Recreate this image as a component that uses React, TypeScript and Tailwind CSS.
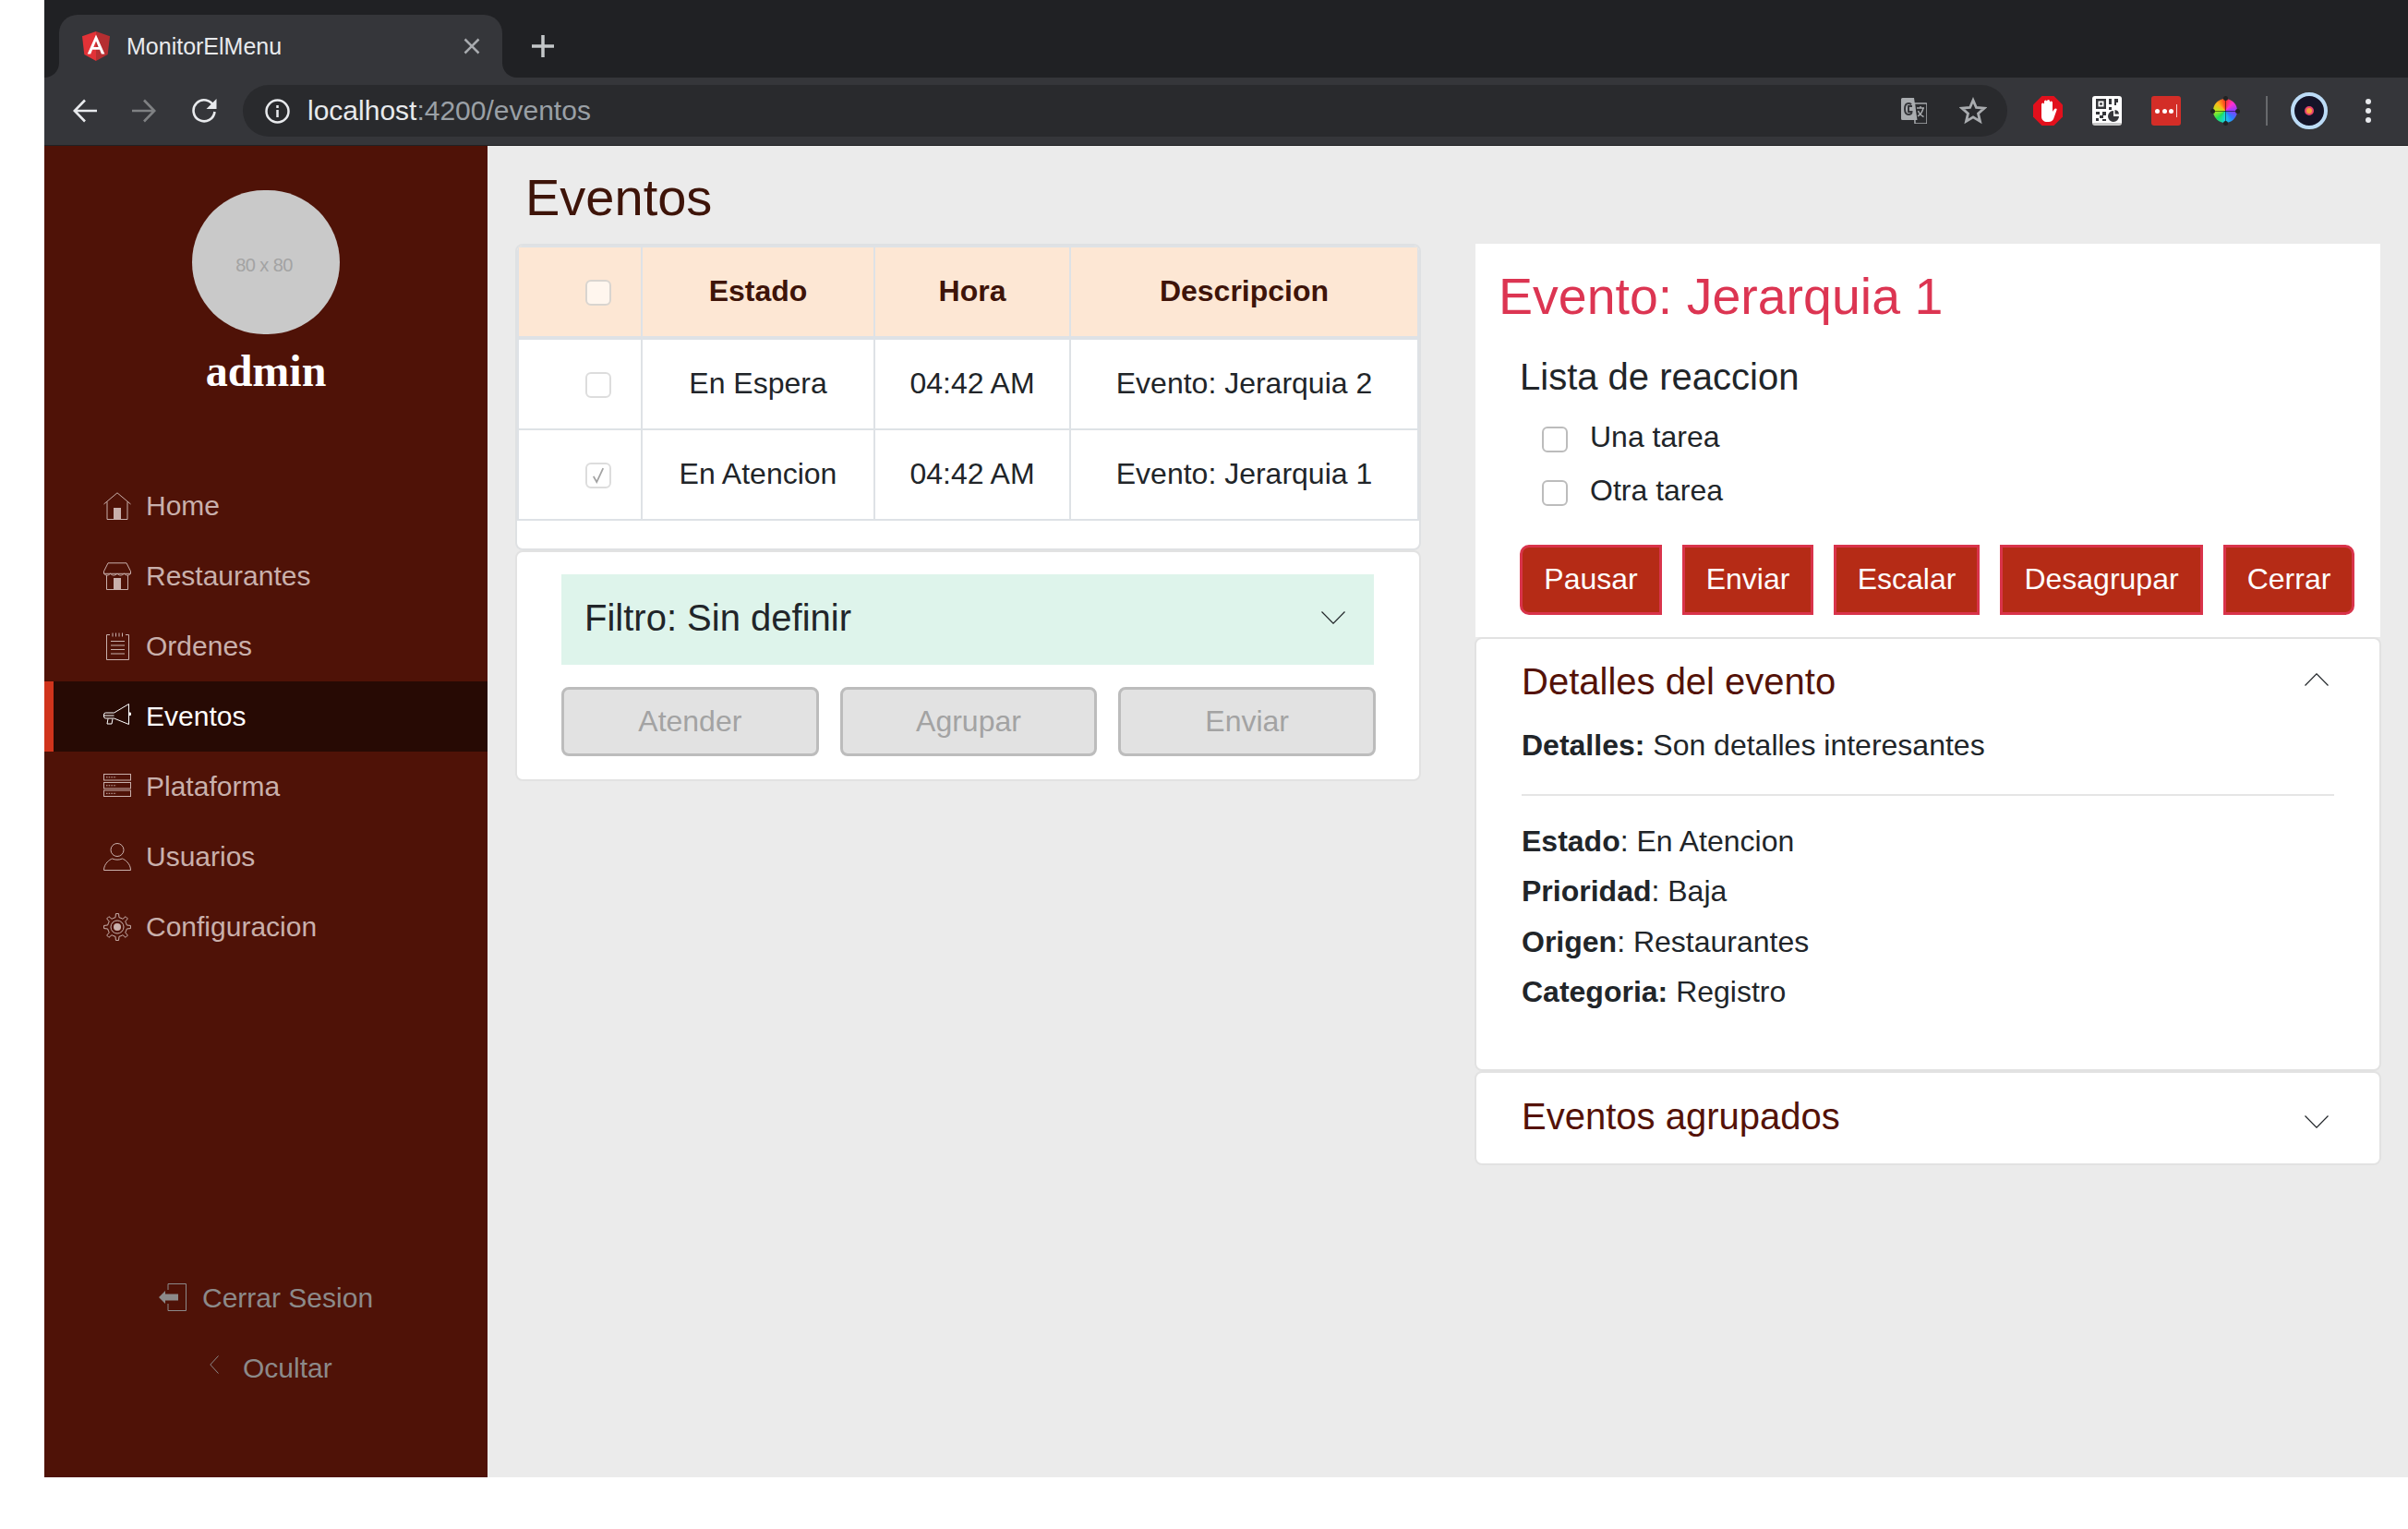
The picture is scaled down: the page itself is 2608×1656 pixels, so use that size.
import type { ReactNode } from "react";

const FONT = "font-['Liberation_Sans',Arial,sans-serif]";

function gearPath() {
  // outer outline of the 8 tooth gear used in the sidebar
  const pts: string[] = [];
  const teeth = 8;
  for (let i = 0; i < teeth; i++) {
    const a = (i / teeth) * Math.PI * 2;
    const step = (Math.PI * 2) / teeth;
    const seq: [number, number][] = [
      [10.5, a - step * 0.5],
      [10.5, a - step * 0.24],
      [14.5, a - step * 0.14],
      [14.5, a + step * 0.14],
      [10.5, a + step * 0.24],
    ];
    seq.forEach(([r, t]) => {
      pts.push(`${(15 + r * Math.cos(t)).toFixed(2)} ${(15 + r * Math.sin(t)).toFixed(2)}`);
    });
  }
  return `M${pts.join("L")}Z`;
}

function NavSvg({ children }: { children: ReactNode }) {
  return (
    <svg viewBox="0 0 30 30" className="w-[30px] h-[30px] shrink-0" fill="none" stroke="currentColor" strokeWidth="1">
      {children}
    </svg>
  );
}

const HomeIcon = () => (
  <NavSvg>
    <path d="M.5 13 15 .8 29.5 13" />
    <path d="M4 10.5v19h22v-19" />
    <rect x="11" y="17" width="8" height="12.5" fill="currentColor" stroke="none" />
  </NavSvg>
);

const StoreIcon = () => (
  <NavSvg>
    <path d="M5 .8h20l4.5 9v2.500h-29V9.800z" />
    <path d="M.5 12.300c2.400 2.400 4.700 2.400 7 0 2.400 2.400 4.700 2.400 7.500 0 2.400 2.400 4.700 2.400 7.500 0 2.400 2.400 4.700 2.400 7 0" />
    <path d="M3.500 14v15.500h23V14" />
    <rect x="11" y="17" width="8" height="12.500" fill="currentColor" stroke="none" />
  </NavSvg>
);

const OrdersIcon = () => (
  <NavSvg>
    <path d="M7 2.500H3.500v27h24v-27H24" />
    <path d="M10 .5v4M13.500 .5v4M17 .5v4M20.500 .5v4" />
    <path d="M8 9.500h15M8 14h15M8 18.500h15M8 23h15" />
  </NavSvg>
);

const MegaphoneIcon = () => (
  <NavSvg>
    <path d="M27.500 1.500v22L11.500 17H2.500a2 2 0 0 1-2-2v-2a2 2 0 0 1 2-2h9z" />
    <path d="M.5 14h11" />
    <path d="M5 17.500 4 23h5l1-5.500" />
    <path d="M28 11h1.500v2.500H28" fill="currentColor" />
  </NavSvg>
);

const ServerIcon = () => (
  <NavSvg>
    <rect x=".5" y="1.500" width="29" height="6.500" />
    <rect x=".5" y="10.500" width="29" height="6.500" />
    <rect x=".5" y="19" width="29" height="6.500" />
    <path d="M3 4.800h11M3 13.800h11M3 22.300h11" strokeDasharray="1.500 1.200" />
  </NavSvg>
);

const UserIcon = () => (
  <NavSvg>
    <circle cx="15" cy="7.500" r="7" />
    <path d="M.5 29.500c0-7 6-11.500 9-12.500 3.500 1.500 7.500 1.500 11 0 3 1 9 5.500 9 12.500z" />
  </NavSvg>
);

const GearIcon = () => (
  <NavSvg>
    <path d={gearPath()} />
    <circle cx="15" cy="15" r="7" />
    <circle cx="15" cy="15" r="4" fill="currentColor" stroke="none" />
  </NavSvg>
);

const NAV = [
  { label: "Home", icon: HomeIcon },
  { label: "Restaurantes", icon: StoreIcon },
  { label: "Ordenes", icon: OrdersIcon },
  { label: "Eventos", icon: MegaphoneIcon, active: true },
  { label: "Plataforma", icon: ServerIcon },
  { label: "Usuarios", icon: UserIcon },
  { label: "Configuracion", icon: GearIcon },
];

function Chevron({ up, className = "" }: { up?: boolean; className?: string }) {
  return (
    <svg viewBox="0 0 26 14" className={`w-[26px] h-[14px] shrink-0 ${className}`} fill="none" stroke="#212529" strokeWidth="1.200">
      <path d={up ? "M.5 13.500 13 .8l12.500 12.700" : "M.5.5 13 13.200 25.500.5"} />
    </svg>
  );
}

function Check({ tone = "row", checked }: { tone?: "head" | "row" | "form"; checked?: boolean }) {
  const cls =
    tone === "head"
      ? "bg-[#fff6ee] border-[#d9d5d0]"
      : tone === "form"
        ? "bg-white border-[#bcbcbc]"
        : "bg-white border-[#dddddd]";
  return (
    <span className={`flex items-center justify-center w-[28px] h-[28px] rounded-[6px] border-2 shrink-0 ${cls}`}>
      {checked && (
        <svg viewBox="0 0 16 20" className="w-[14px] h-[18px]" fill="none" stroke="#a3a3a3" strokeWidth="2">
          <path d="M2 11l4 7 8-17" />
        </svg>
      )}
    </span>
  );
}

function BrowserChrome() {
  return (
    <div className={`${FONT} shrink-0`}>
      {/* Tabs */}
      <div className="h-[84px] bg-[#202124] flex items-end">
        <div className="relative ml-[16px] w-[480px] h-[68px] bg-[#35363a] rounded-t-[20px] flex items-center">
          <svg viewBox="0 0 16 16" className="absolute -left-[16px] bottom-0 w-[16px] h-[16px]">
            <path d="M16 0v16H0c9 0 16-7 16-16z" fill="#35363a" />
          </svg>
          <svg viewBox="0 0 16 16" className="absolute -right-[16px] bottom-0 w-[16px] h-[16px]">
            <path d="M0 0v16h16C7 16 0 9 0 0z" fill="#35363a" />
          </svg>
          <svg viewBox="0 0 32 32" className="ml-[24px] w-[32px] h-[32px] shrink-0">
            <path d="M16 0 1 5.300l2.300 19.800L16 32z" fill="#e23237" />
            <path d="M16 0l15 5.300-2.300 19.800L16 32z" fill="#b52e31" />
            <path d="M16 3.600 6.700 24.500h3.500l1.900-4.700h7.900l1.900 4.700h3.500zm2.700 13.300h-5.400L16 10.400z" fill="#fff" />
          </svg>
          <span className="ml-[17px] text-[25px] leading-none text-[#e8eaed] flex-1">MonitorElMenu</span>
          <svg viewBox="0 0 18 18" className="mr-[24px] w-[18px] h-[18px]" stroke="#a8abaf" strokeWidth="2.500">
            <path d="M1.500 1.500l15 15M16.500 1.500l-15 15" />
          </svg>
        </div>
        <svg viewBox="0 0 24 24" className="ml-[32px] mb-[22px] w-[24px] h-[24px]" stroke="#c4c7c9" strokeWidth="3.500">
          <path d="M12 0v24M0 12h24" />
        </svg>
      </div>
      {/* Toolbar */}
      <div className="h-[74px] bg-[#35363a] border-b border-[#202124] flex items-center pb-[1px]">
        <svg viewBox="0 0 26 26" className="ml-[31px] w-[26px] h-[26px]" fill="none" stroke="#e8eaed" strokeWidth="2.600">
          <path d="M26 13H2M13 1.500 1.800 13 13 24.500" />
        </svg>
        <svg viewBox="0 0 26 26" className="ml-[38px] w-[26px] h-[26px]" fill="none" stroke="#7f8183" strokeWidth="2.600">
          <path d="M0 13h24M13 1.500 24.200 13 13 24.500" />
        </svg>
        <svg viewBox="0 0 28 28" className="ml-[38px] w-[28px] h-[28px]" fill="none">
          <path d="M24.500 9A11.500 11.500 0 1 0 25.500 15" stroke="#e8eaed" strokeWidth="2.600" />
          <path d="M27.500 1v11h-11z" fill="#e8eaed" />
        </svg>
        <div className="ml-[28px] w-[1911px] h-[56px] rounded-full bg-[#292a2d] flex items-center">
          <svg viewBox="0 0 27 27" className="ml-[24px] w-[27px] h-[27px]" fill="none" stroke="#e8eaed" strokeWidth="2.500">
            <circle cx="13.500" cy="13.500" r="12" />
            <path d="M13.500 12v8M13.500 7v3" />
          </svg>
          <span className="ml-[19px] text-[30px] leading-none text-[#e8eaed]">
            localhost<span className="text-[#9aa0a6]">:4200/eventos</span>
          </span>
          <svg viewBox="0 0 28 28" className="ml-auto w-[28px] h-[28px]">
            <path d="M0 1.500A1.500 1.500 0 0 1 1.500 0H14l3.500 24H1.500A1.500 1.500 0 0 1 0 22.500z" fill="#a9acaf" />
            <path d="M14.500 6H27a1 1 0 0 1 1 1v20a1 1 0 0 1-1 1H15z" fill="none" stroke="#a9acaf" strokeWidth="1.500" />
            <path d="M12 9H8v6h3.500c0 2-1.500 3-3.500 3s-4-2-4-6 2-6 4-6c1.200 0 2.200.4 3 1.200" fill="none" stroke="#35363a" strokeWidth="2" />
            <path d="M17 11h8M21 9v2M24 11c-.8 4-3 7-6 9M18.500 14c1 3 3 5 6 6.500" fill="none" stroke="#a9acaf" strokeWidth="1.400" />
          </svg>
          <svg viewBox="0 0 30 30" className="ml-[35px] mr-[22px] w-[30px] h-[30px]" fill="none" stroke="#a9acaf" strokeWidth="2.800">
            <path d="M15 3.500l3.400 8 8.600.7-6.500 5.700 2 8.500-7.500-4.500-7.500 4.500 2-8.500L3 12.200l8.600-.7z" />
          </svg>
        </div>
        {/* Extensions */}
        <svg viewBox="0 0 32 32" className="ml-[28px] w-[32px] h-[32px]">
          <path d="M9.500 0h13L32 9.500v13L22.500 32h-13L0 22.500v-13z" fill="#e2101c" />
          <path d="M9 13V9a1.500 1.500 0 0 1 3 0V6a1.500 1.500 0 0 1 3 0v-.5a1.500 1.500 0 0 1 3 0V7a1.500 1.500 0 0 1 3 0v10c1-1.500 2-3.500 3.500-3.500 1 0 1.500.8 1 1.800L22 25c-1 2-3 3-5 3h-2c-3 0-6-2-6-6z" fill="#fff" />
        </svg>
        <div className="ml-[32px] w-[32px] h-[32px] rounded-[3px] bg-white border-b-[3px] border-[#c9c9c9] flex items-center justify-center">
          <svg viewBox="0 0 26 26" className="w-[26px] h-[26px]" fill="#35363a">
            <path d="M1 1h11v11H1zm2.500 2.500v6h6v-6zM5.200 5.200h2.600v2.600H5.200z" fillRule="evenodd" />
            <path d="M15 1h3v6h-3zM21 1h4v4h-2v3h-2zM15 10h3v3h-3zM1 15h4v3H1zM8 15h4v4H9v3H5v-3h3zM1 22h3v3H1zM8 23h4v2H8z" />
            <path d="M20 14a6 6 0 1 0 6 6h-6z" />
            <path d="M21.500 13a5 5 0 0 1 4.500 4.500h-4.500z" />
          </svg>
        </div>
        <div className="ml-[32px] w-[32px] h-[32px] rounded-[3px] bg-[#d32d27] flex items-center justify-center gap-[2.500px]">
          <span className="w-[5px] h-[5px] rounded-full bg-white" />
          <span className="w-[5px] h-[5px] rounded-full bg-white" />
          <span className="w-[5px] h-[5px] rounded-full bg-white" />
          <span className="w-[1.500px] h-[14px] bg-white/80" />
        </div>
        <div className="relative ml-[32px] w-[32px] h-[32px] flex items-center justify-center">
          <span className="w-[26px] h-[26px] rounded-full bg-[conic-gradient(#ff3b1f,#ff2fd0,#8a3cff,#2f7bff,#19d4e8,#1ee05a,#b8e81e,#ffb31a,#ff3b1f)]" />
          <span className="absolute left-[15.500px] top-0 w-[1px] h-[32px] bg-black/50" />
          <span className="absolute top-[15.500px] left-0 h-[1px] w-[32px] bg-black/50" />
          <span className="absolute left-[13.500px] top-0 w-[5px] h-[5px] rounded-full bg-[#222]" />
          <span className="absolute left-[13.500px] bottom-0 w-[5px] h-[5px] rounded-full bg-[#222]" />
          <span className="absolute top-[13.500px] left-0 w-[5px] h-[5px] rounded-full bg-[#222]" />
          <span className="absolute top-[13.500px] right-0 w-[5px] h-[5px] rounded-full bg-[#222]" />
        </div>
        <span className="ml-[28px] w-[2px] h-[32px] bg-[#67696c]" />
        <span className="ml-[25px] w-[40px] h-[40px] rounded-full bg-[#141428] border-[4px] border-[#bcdcf7] flex items-center justify-center">
          <span className="w-[10px] h-[10px] rounded-full bg-[#f5a13c] border-2 border-[#e8436e]" />
        </span>
        <span className="ml-[41px] flex flex-col gap-[4px]">
          <span className="w-[6px] h-[6px] rounded-full bg-[#e8eaed]" />
          <span className="w-[6px] h-[6px] rounded-full bg-[#e8eaed]" />
          <span className="w-[6px] h-[6px] rounded-full bg-[#e8eaed]" />
        </span>
      </div>
    </div>
  );
}

function Sidebar() {
  return (
    <aside className="w-[480px] shrink-0 bg-[#4f1207] flex flex-col pt-[48px] pb-[81px]">
      <div className="self-center w-[160px] h-[156px] rounded-full bg-[#c9c9c9] flex items-center justify-center pt-[6px] pr-[4px] text-[20px] text-[#a3a3a3] tracking-[-0.6px]">
        80 x 80
      </div>
      <div className="mt-[12px] h-[56px] leading-[56px] text-center text-[48px] font-bold text-white font-['Liberation_Serif',serif]">
        admin
      </div>
      <nav className="mt-[80px]">
        {NAV.map((item) => (
          <div
            key={item.label}
            className={
              item.active
                ? "h-[76px] flex items-center gap-[16px] pl-[54px] border-l-[10px] border-[#d0341c] bg-[#270a04] text-white text-[30px]"
                : "h-[76px] flex items-center gap-[16px] pl-[64px] text-[#c9b0ac] text-[30px]"
            }
          >
            <item.icon />
            <span className="-mt-[2px]">{item.label}</span>
          </div>
        ))}
      </nav>
      <div className="mt-auto text-[#8c8a8a] text-[30px]">
        <div className="h-[76px] flex items-center gap-[17px] pl-[124px]">
          <svg viewBox="0 0 30 30" className="w-[30px] h-[30px] shrink-0" fill="none" stroke="currentColor" strokeWidth="1">
            <path d="M10 7V.5h19.500v29H10V22" />
            <path d="M0 15l7-7v3.500h14v7H7V22z" fill="currentColor" stroke="none" />
          </svg>
          <span>Cerrar Sesion</span>
        </div>
        <div className="h-[76px] flex items-center pl-[179px]">
          <svg viewBox="0 0 10 20" className="w-[10px] h-[20px] -mt-[6px] shrink-0" fill="none" stroke="currentColor" strokeWidth="1">
            <path d="M9.500.5.800 10l8.700 9.500" />
          </svg>
          <span className="ml-[26px]">Ocultar</span>
        </div>
      </div>
    </aside>
  );
}

const ROWS = [
  { estado: "En Espera", hora: "04:42 AM", desc: "Evento: Jerarquia 2", checked: false },
  { estado: "En Atencion", hora: "04:42 AM", desc: "Evento: Jerarquia 1", checked: true },
];

function EventsColumn() {
  return (
    <div className="w-[977px] shrink-0">
      <h1 className="h-[106px] pl-[9px] pt-[23px] text-[56px] leading-[66px] text-[#3e1409]">Eventos</h1>
      <div className="-mx-[2px] bg-white border-2 border-[#dfe1e3] rounded-[8px] overflow-hidden pb-[30px]">
        <table className="w-full table-fixed border-separate border-spacing-0 text-center text-[32px] text-[#212529]">
          <colgroup>
            <col className="w-[136px]" />
            <col className="w-[252px]" />
            <col className="w-[212px]" />
            <col className="w-[377px]" />
          </colgroup>
          <thead>
            <tr className="bg-[#fde7d4] text-[#3e1409]">
              <th className="h-[102px] border-t-2 border-b-4 border-x-2 border-[#dee2e6] pl-[72px] pt-[2px]">
                <Check tone="head" />
              </th>
              <th className="border-t-2 border-b-4 border-r-2 border-[#dee2e6] font-bold pb-[3px]">Estado</th>
              <th className="border-t-2 border-b-4 border-r-2 border-[#dee2e6] font-bold pb-[3px]">Hora</th>
              <th className="border-t-2 border-b-4 border-r-2 border-[#dee2e6] font-bold pb-[3px]">Descripcion</th>
            </tr>
          </thead>
          <tbody>
            {ROWS.map((r) => (
              <tr key={r.desc}>
                <td className="h-[98px] border-b-2 border-x-2 border-[#dee2e6] pl-[72px] pt-[2px]">
                  <Check checked={r.checked} />
                </td>
                <td className="border-b-2 border-r-2 border-[#dee2e6] pb-[3px]">{r.estado}</td>
                <td className="border-b-2 border-r-2 border-[#dee2e6] pb-[3px]">{r.hora}</td>
                <td className="border-b-2 border-r-2 border-[#dee2e6] pb-[3px]">{r.desc}</td>
              </tr>
            ))}
          </tbody>
        </table>
      </div>
      <div className="-mx-[2px] h-[250px] bg-white border-2 border-[#e2e2e2] rounded-[8px] pt-[24px] pl-[48px] pr-[49px]">
        <div className="h-[98px] bg-[#def4eb] flex items-center justify-between pl-[25px] pr-[31px] pb-[5px] text-[40px] text-[#212529]">
          <span>Filtro: Sin definir</span>
          <Chevron />
        </div>
        <div className="mt-[24px] -mr-[2px] grid grid-cols-3 gap-[23px]">
          {["Atender", "Agrupar", "Enviar"].map((b) => (
            <button
              key={b}
              disabled
              className="h-[75px] rounded-[8px] bg-[#e2e2e2] border-[3px] border-[#bcbcbc] text-[32px] text-[#a3a3a3] pb-[2px]"
            >
              {b}
            </button>
          ))}
        </div>
      </div>
    </div>
  );
}

const ACTIONS = [
  { label: "Pausar", cls: "w-[154px] rounded-l-[10px]" },
  { label: "Enviar", cls: "w-[142px]" },
  { label: "Escalar", cls: "w-[158px]" },
  { label: "Desagrupar", cls: "w-[220px]" },
  { label: "Cerrar", cls: "w-[142px] rounded-r-[10px]" },
];

function Field({ name, value, boldColon }: { name: string; value: string; boldColon?: boolean }) {
  return (
    <p className="h-[54.4px] leading-[54.4px]">
      {boldColon ? (
        <>
          <b>{name}:</b> {value}
        </>
      ) : (
        <>
          <b>{name}</b>: {value}
        </>
      )}
    </p>
  );
}

function DetailColumn() {
  return (
    <div className="ml-[61px] w-[980px] shrink-0 pt-[106px]">
      <div className="h-[426px] bg-white pt-[25px]">
        <h2 className="pl-[25px] h-[64px] leading-[64px] text-[55.5px] text-[#dc3552]">Evento: Jerarquia 1</h2>
        <div className="pl-[48px] text-[#212529]">
          <h3 className="mt-[31px] h-[48px] leading-[48px] text-[40px]">Lista de reaccion</h3>
          <label className="mt-[21px] pl-[24px] flex items-start gap-[24px] h-[40px] leading-[40px] text-[32px]">
            <span className="mt-[9px]"><Check tone="form" /></span>
            Una tarea
          </label>
          <label className="mt-[18px] pl-[24px] flex items-start gap-[24px] h-[40px] leading-[40px] text-[32px]">
            <span className="mt-[9px]"><Check tone="form" /></span>
            Otra tarea
          </label>
          <div className="mt-[39px] flex gap-[22px]">
            {ACTIONS.map((a) => (
              <button
                key={a.label}
                className={`h-[76px] bg-[#b52b16] border-[3px] border-[#d9334a] text-white text-[32px] pb-[2px] ${a.cls}`}
              >
                {a.label}
              </button>
            ))}
          </div>
        </div>
      </div>
      <div className="w-[982px] -ml-[1px] h-[470px] bg-white border-2 border-[#e2e2e2] rounded-[8px] pl-[49px] pt-[22px] text-[32px] text-[#212529]">
        <div className="flex items-center justify-between pr-[55px] h-[48px]">
          <h3 className="text-[40px] text-[#541208]">Detalles del evento</h3>
          <Chevron up className="-mt-[4px]" />
        </div>
        <p className="mt-[21px] h-[48px] leading-[48px]">
          <b>Detalles:</b> Son detalles interesantes
        </p>
        <div className="mt-[29px] mr-[49px] h-[2px] bg-[#e5e5e5]" />
        <div className="mt-[22px]">
          <Field name="Estado" value="En Atencion" />
          <Field name="Prioridad" value="Baja" />
          <Field name="Origen" value="Restaurantes" />
          <Field name="Categoria" value="Registro" boldColon />
        </div>
      </div>
      <div className="w-[982px] -ml-[1px] h-[102px] bg-white border-2 border-[#e2e2e2] rounded-[8px] pl-[49px] pr-[55px] pb-[4px] flex items-center justify-between">
        <h3 className="text-[40px] text-[#541208]">Eventos agrupados</h3>
        <Chevron className="mt-[12px]" />
      </div>
    </div>
  );
}

export default function App() {
  return (
    <div className={`${FONT} w-[2608px] h-[1656px] bg-white pl-[48px] pb-[56px] overflow-hidden`}>
      <div className="h-full flex flex-col">
        <BrowserChrome />
        <div className="flex-1 flex min-h-0">
          <Sidebar />
          <main className="flex-1 bg-[#ebebeb] pl-[32px] flex items-start">
            <EventsColumn />
            <DetailColumn />
          </main>
        </div>
      </div>
    </div>
  );
}
